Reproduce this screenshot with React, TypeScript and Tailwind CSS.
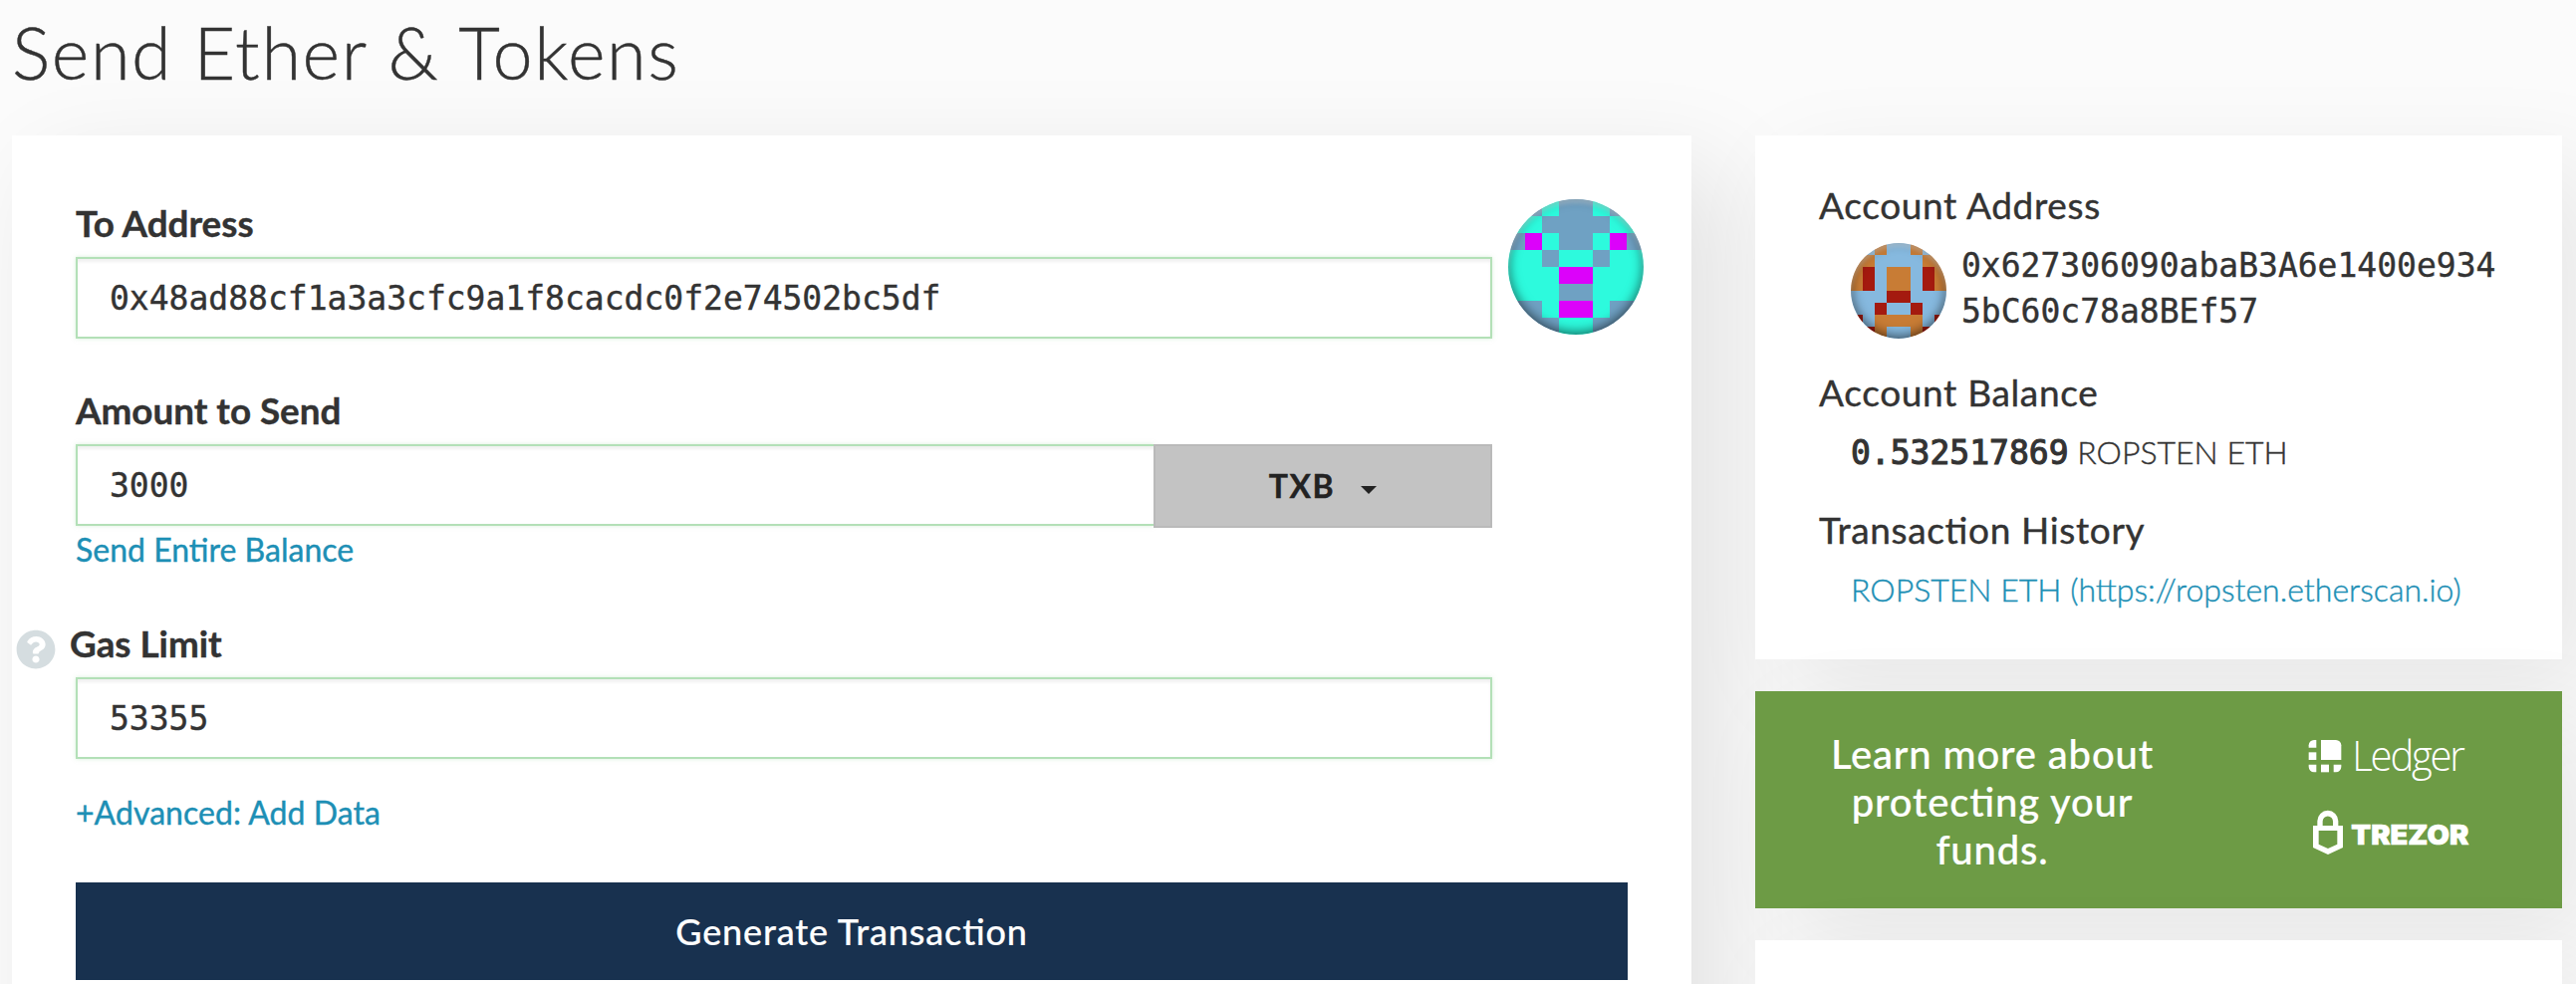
import type { ReactNode } from "react";
import { FaQuestionCircle } from "react-icons/fa";

type IdenticonProps = {
  rows: string[];
  palette: Record<string, string>;
  className: string;
};

function Identicon({ rows, palette, className }: IdenticonProps) {
  return (
    <div className={`relative shrink-0 overflow-hidden rounded-full ${className}`}>
      <svg viewBox="0 0 8 8" className="block h-full w-full" shapeRendering="crispEdges">
        {rows.flatMap((row, y) =>
          (row + row.split("").reverse().join(""))
            .split("")
            .map((c, x) => <rect key={`${x}-${y}`} x={x} y={y} width="1" height="1" fill={palette[c]} />),
        )}
      </svg>
      <div className="absolute inset-0 rounded-full shadow-[inset_0_4px_4px_rgba(255,255,255,0.3),inset_0_-2px_12px_rgba(0,0,0,0.6)]" />
    </div>
  );
}

const recipientRows = ["bbtb", "ttbb", "bmtb", "ttbt", "tttm", "tttb", "bbtm", "bbbt"];
const accountRows = ["bbob", "oobb", "orbo", "orbo", "bbbr", "bbrb", "rboo", "rrob"];

function FieldLabel({ children }: { children: ReactNode }) {
  return <label className="block h-11 text-[36.8px] leading-[44px] font-bold">{children}</label>;
}

function Field({ value, className }: { value: string; className: string }) {
  return (
    <div
      className={`flex h-[82px] items-center border-2 border-[#b3e0b7] bg-white pt-0.5 pl-8 font-['DejaVu_Sans_Mono',monospace] text-[33px] shadow-[inset_0_3px_3px_rgba(0,0,0,0.06),0_0_4px_rgba(179,224,183,0.5)] ${className}`}
    >
      {value}
    </div>
  );
}

function SideHeading({ children }: { children: ReactNode }) {
  return (
    <h2 className="mb-4 h-11 text-[37px] leading-[44px] tracking-[0.65px] [font-feature-settings:'liga'_1]">
      {children}
    </h2>
  );
}

function LedgerLogo() {
  return (
    <svg viewBox="48 30 480 138" className="block h-[46px] w-[160px] overflow-visible" fill="#fff">
      <path d="M90 39h45a16 16 0 0 1 16 16v44H90z" />
      <path d="M76 39v23H53v-7a16 16 0 0 1 16-16z" />
      <path d="M53 76h23v23H53z" />
      <path d="M53 113h23v23h-7a16 16 0 0 1-16-16z" />
      <path d="M90 113h24v23H90z" />
      <path d="M128 113h23v7a16 16 0 0 1-16 16h-7z" />
      <text
        x="184"
        y="132"
        fontSize="126"
        fontWeight="300"
        fontFamily="'Open Sans', sans-serif"
        letterSpacing="-7"
        textLength="334"
        lengthAdjust="spacingAndGlyphs"
      >
        Ledger
      </text>
    </svg>
  );
}

function TrezorLogo() {
  return (
    <svg viewBox="60 246 480 144" className="mt-[26px] ml-1 block h-[48px] w-[160px]" fill="#fff">
      <path
        fillRule="evenodd"
        d="M79 297v-14a31.500 31.500 0 0 1 63 0v14h14v66l-45 21-45-21v-66zM95 297h31v-13a15.500 15.500 0 0 0-31 0zM83 312v41l28 13 28-13v-41z"
      />
      <text
        x="181"
        y="353"
        fontSize="80"
        fontWeight="900"
        fontFamily="Inter, sans-serif"
        stroke="#fff"
        strokeWidth="2"
        textLength="354"
        lengthAdjust="spacingAndGlyphs"
      >
        TREZOR
      </text>
    </svg>
  );
}

export default function App() {
  return (
    <div className="h-[988px] w-[2586px] overflow-hidden bg-[#fbfbfb] pl-3 font-[Lato,sans-serif] text-[#333] [-webkit-text-stroke-width:0.4px]">
      <h1 className="h-[136px] text-[72px] leading-[104px] font-light tracking-[1.6px]">Send Ether &amp; Tokens</h1>

      <div className="flex items-start gap-16">
        <main className="h-[1000px] w-[1686px] bg-white px-16 pt-16 shadow-[32px_32px_94px_0_rgba(0,0,0,0.1)]">
          <div className="flex items-start gap-4">
            <div className="w-[1422px] shrink-0 pt-0.5">
              <FieldLabel>To Address</FieldLabel>
              <Field value="0x48ad88cf1a3a3cfc9a1f8cacdc0f2e74502bc5df" className="mt-3" />
            </div>
            <Identicon
              rows={recipientRows}
              palette={{ b: "#6fa1c3", t: "#2dfadd", m: "#dc02fa" }}
              className="size-[136px]"
            />
          </div>

          <div className="mt-[50px] w-[1422px]">
            <FieldLabel>Amount to Send</FieldLabel>
            <div className="mt-3 flex items-start">
              <Field value="3000" className="flex-1 border-r-0" />
              <button className="flex h-[84px] w-[340px] items-center justify-center gap-[26px] border-2 border-[#bababa] bg-[#c3c3c3] text-[32px] font-bold tracking-[1.6px] text-[#222]">
                TXB
                <svg viewBox="0 0 16 8" className="mt-2 h-2 w-4" fill="#222">
                  <path d="M0 0h16L8 8z" />
                </svg>
              </button>
            </div>
            <a className="mt-[3px] block h-[37px] text-[32px] leading-[38px] text-[#1d8fb5]">Send Entire Balance</a>
          </div>

          <div className="mt-[54px] w-[1422px]">
            <div className="-ml-[60px] flex h-11 items-start gap-[14px]">
              <FaQuestionCircle className="mt-2 size-10 shrink-0 text-[#d5dde0]" />
              <FieldLabel>Gas Limit</FieldLabel>
            </div>
            <Field value="53355" className="mt-3" />
            <a className="mt-[35px] block h-[37px] text-[32px] leading-[38px] tracking-[0.05px] text-[#1d8fb5]">
              +Advanced: Add Data
            </a>
          </div>

          <button className="mt-[52px] block h-[98px] w-full bg-[#18314f] text-[36px] font-medium tracking-[0.85px] text-white [font-feature-settings:'liga'_1] [-webkit-text-stroke-width:0.2px]">
            Generate Transaction
          </button>
        </main>

        <aside className="flex w-[810px] flex-col gap-8">
          <section className="h-[526px] bg-white px-16 pt-12 shadow-[32px_32px_94px_0_rgba(0,0,0,0.08)]">
            <SideHeading>Account Address</SideHeading>
            <div className="mb-8 ml-8 flex h-24 items-start gap-[15px]">
              <Identicon
                rows={accountRows}
                palette={{ b: "#86b9df", o: "#c87c35", r: "#a41a0f" }}
                className="size-24"
              />
              <p className="w-[539px] font-['DejaVu_Sans_Mono',monospace] text-[33px] leading-[46px] break-all">
                0x627306090abaB3A6e1400e9345bC60c78a8BEf57
              </p>
            </div>
            <SideHeading>Account Balance</SideHeading>
            <p className="mb-8 ml-8 h-[46px] text-[32px] leading-[44px] font-light whitespace-nowrap">
              <span className="font-['DejaVu_Sans_Mono',monospace] text-[33px] font-normal [-webkit-text-stroke-width:1.1px]">
                0.532517869
              </span>{" "}
              ROPSTEN ETH
            </p>
            <SideHeading>Transaction History</SideHeading>
            <a className="ml-8 block text-[32px] leading-[44px] font-light whitespace-nowrap text-[#1d8fb5]">
              ROPSTEN ETH (https://ropsten.etherscan.io)
            </a>
          </section>

          <section className="flex h-[218px] items-start bg-[#6d9b45] pl-16 shadow-[32px_32px_94px_0_rgba(0,0,0,0.08)]">
            <p className="mt-[39px] w-[348px] text-center text-[40px] leading-[48px] font-medium tracking-[0.85px] text-white [font-feature-settings:'liga'_1] [-webkit-text-stroke-width:0.2px]">
              Learn more about protecting your funds.
            </p>
            <div className="mt-[46px] ml-[142px]">
              <LedgerLogo />
              <TrezorLogo />
            </div>
          </section>

          <section className="h-[200px] bg-white shadow-[32px_32px_94px_0_rgba(0,0,0,0.08)]" />
        </aside>
      </div>
    </div>
  );
}
